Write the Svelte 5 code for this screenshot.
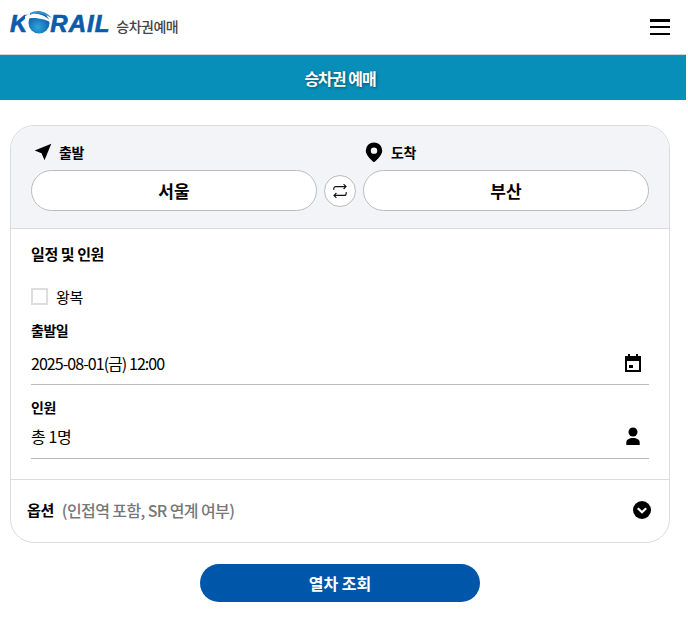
<script>
	let from = '서울';
	let to = '부산';
</script>

<div class="page">
	<header class="top">
		<div class="logo">
			<span class="brand">
				<span class="k">K</span>
				<svg class="globe" viewBox="0 0 30 26" width="30" height="26" aria-hidden="true">
					<defs>
						<radialGradient id="ball" cx="0.45" cy="0.7" r="0.65">
							<stop offset="0" stop-color="#2fa6dc" />
							<stop offset="1" stop-color="#0a5aa8" />
						</radialGradient>
					</defs>
					<circle cx="14" cy="14" r="10.500" fill="url(#ball)" />
					<path d="M0 7C8 2 20 4 30 16C20 9 9 8 0 10Z" fill="#fff" />
					<path d="M5 4C12 0 21 2 27 9C20 5 12 3 5 6Z" fill="#2f93d2" />
				</svg>
				<span class="rail">RAIL</span>
			</span>
			<span class="sub">승차권예매</span>
		</div>
		<button class="menu" type="button" aria-label="메뉴">
			<span></span><span></span><span></span>
		</button>
	</header>

	<div class="band">승차권 예매</div>

	<section class="card">
		<div class="route">
			<div class="labels">
				<div class="lbl">
					<svg viewBox="0 0 24 24" width="20" height="20" aria-hidden="true"><path d="M22 2L2 10.200l8.200 3.400L13.800 22z" fill="#000" /></svg>
					<span>출발</span>
				</div>
				<div class="lbl">
					<svg viewBox="0 0 24 24" width="22" height="22" aria-hidden="true"><path fill-rule="evenodd" d="M12 1.500a9 9 0 0 0-9 9c0 6 9 12.500 9 12.500s9-6.500 9-12.500a9 9 0 0 0-9-9zm0 5.500a3.500 3.500 0 1 1 0 7 3.500 3.500 0 0 1 0-7z" fill="#000" /></svg>
					<span>도착</span>
				</div>
			</div>
			<div class="stations">
				<button class="station" type="button">{from}</button>
				<button class="swap" type="button" aria-label="출발 도착 바꾸기">
					<svg viewBox="0 0 16 16" width="16" height="16" fill="none" stroke="#111" stroke-width="1.100" aria-hidden="true">
						<path d="M1.800 7V5.600A2 2 0 0 1 3.800 3.600H14M11.600 1.200L14 3.600L11.600 6" />
						<path d="M14.200 9V10.400A2 2 0 0 1 12.200 12.400H2M4.400 10L2 12.400L4.400 14.800" />
					</svg>
				</button>
				<button class="station" type="button">{to}</button>
			</div>
		</div>

		<div class="schedule">
			<h2>일정 및 인원</h2>
			<label class="round">
				<span class="box"></span>
				<span>왕복</span>
			</label>
			<div class="field">
				<div class="name">출발일</div>
				<div class="value date">
					<span>2025-08-01(금) 12:00</span>
					<svg viewBox="0 0 16 18" width="16" height="18" aria-hidden="true"><path fill-rule="evenodd" d="M3 0h2v2h6V0h2v2h3v16H0V2h3zM2 7v9h12V7zM4 11h4v3H4z" fill="#000" /></svg>
				</div>
			</div>
			<div class="field">
				<div class="name">인원</div>
				<div class="value people">
					<span>총 1명</span>
					<svg viewBox="0 0 16 18" width="16" height="18" aria-hidden="true"><circle cx="8" cy="5" r="4.500" fill="#000" /><path d="M1.300 18v-2.500c0-3 3-4.500 6.700-4.500s6.700 1.500 6.700 4.500V18z" fill="#000" /></svg>
				</div>
			</div>
		</div>

		<div class="options">
			<div class="opt-text"><strong>옵션</strong><span>(인접역 포함, SR 연계 여부)</span></div>
			<svg viewBox="0 0 18 18" width="18" height="18" aria-hidden="true">
				<circle cx="9" cy="9" r="9" fill="#000" />
				<path d="M4.800 7.200L9 11.200L13.200 7.200" fill="none" stroke="#fff" stroke-width="2.200" />
			</svg>
		</div>
	</section>

	<div class="actions">
		<button class="search" type="button">열차 조회</button>
	</div>
</div>

<style>
	:global(body) {
		margin: 0;
		background: #fff;
	}

	.page {
		width: 686px;
		font-family: "Noto Sans CJK KR", "Noto Sans", sans-serif;
		color: #000;
		overflow: hidden;
	}

	button {
		font-family: inherit;
		padding: 0;
		cursor: pointer;
	}

	.top {
		height: 54px;
		border-bottom: 1px solid #d4d4d4;
		display: flex;
		align-items: center;
		justify-content: space-between;
		padding: 0 16px 0 10px;
	}

	.logo {
		display: flex;
		align-items: center;
		gap: 6px;
		margin-top: -6px;
	}

	.brand {
		display: flex;
		align-items: center;
		height: 30px;
		font-family: "Liberation Sans", sans-serif;
		font-weight: 700;
		font-style: italic;
		font-size: 24px;
		color: #0a5ca8;
	}

	.k {
		-webkit-text-stroke: 0.7px #0a5ca8;
	}

	.globe {
		margin: -4px -5px 0 -2px;
	}

	.rail {
		letter-spacing: 1px;
		-webkit-text-stroke: 0.7px #0a5ca8;
	}

	.sub {
		font-size: 14px;
		font-weight: 500;
		letter-spacing: -0.5px;
		color: #444;
		margin-top: 4px;
	}

	.menu {
		width: 20px;
		height: 16px;
		border: 0;
		background: none;
		display: flex;
		flex-direction: column;
		justify-content: space-between;
	}

	.menu span {
		display: block;
		height: 2.500px;
		background: #000;
	}

	.band {
		height: 45px;
		background: #078fb9;
		color: #fff;
		display: flex;
		align-items: center;
		justify-content: center;
		padding-right: 6px;
		font-size: 16px;
		font-weight: 700;
		letter-spacing: -1px;
		text-shadow: 1px 1px 3px rgba(0, 0, 0, 0.45);
	}

	.card {
		margin: 25px 16px 0 10px;
		border: 1px solid #dcdcdc;
		border-radius: 24px;
		overflow: hidden;
	}

	.route {
		background: #f2f4f8;
		border-bottom: 1px solid #dcdcdc;
		padding: 14px 20px 17px;
	}

	.labels {
		display: grid;
		grid-template-columns: 1fr 1fr;
		column-gap: 42px;
		height: 30px;
	}

	.lbl {
		display: flex;
		align-items: center;
		gap: 6px;
		font-size: 14px;
		font-weight: 700;
		letter-spacing: -0.5px;
		height: 24px;
		padding-left: 2px;
	}

	.stations {
		display: flex;
		align-items: center;
		gap: 7px;
	}

	.station {
		flex: 1;
		height: 41px;
		border: 1px solid #bbb;
		border-radius: 21px;
		background: #fff;
		font-size: 17px;
		font-weight: 700;
		color: #000;
	}

	.swap {
		width: 32px;
		height: 32px;
		flex: none;
		border: 1px solid #bbb;
		border-radius: 50%;
		background: #fff;
		display: flex;
		align-items: center;
		justify-content: center;
	}

	.schedule {
		padding: 13px 20px 20px;
	}

	h2 {
		margin: 0;
		font-size: 15px;
		font-weight: 700;
		letter-spacing: -0.4px;
		line-height: 24px;
	}

	.round {
		display: flex;
		align-items: center;
		gap: 8px;
		margin-top: 18px;
		font-size: 15px;
		height: 24px;
		letter-spacing: -0.3px;
	}

	.box {
		width: 17px;
		height: 17px;
		box-sizing: border-box;
		border: 2px solid #dedede;
		background: #fff;
	}

	.field {
		margin-top: 10px;
	}

	.name {
		font-size: 14px;
		font-weight: 700;
		line-height: 24px;
		letter-spacing: -0.5px;
	}

	.value {
		height: 43px;
		box-sizing: border-box;
		border-bottom: 1px solid #b9b9b9;
		display: flex;
		align-items: center;
		justify-content: space-between;
		font-size: 16px;
		letter-spacing: -0.95px;
		padding-right: 8px;
	}

	.people {
		height: 40px;
		padding-bottom: 6px;
		letter-spacing: -0.4px;
	}

	.options {
		border-top: 1px solid #dcdcdc;
		height: 63px;
		box-sizing: border-box;
		display: flex;
		align-items: center;
		justify-content: space-between;
		padding: 0 18px 3px 16px;
	}

	.opt-text {
		display: flex;
		align-items: center;
		gap: 8px;
		font-size: 15px;
		letter-spacing: -0.4px;
	}

	.opt-text strong {
		font-weight: 700;
	}

	.opt-text span {
		color: #777;
		font-size: 16px;
		letter-spacing: -0.6px;
		font-weight: 500;
	}

	.actions {
		display: flex;
		justify-content: center;
		margin-top: 21px;
		padding-right: 6px;
	}

	.search {
		width: 280px;
		height: 38px;
		border: 0;
		border-radius: 19px;
		background: #0056a8;
		color: #fff;
		font-size: 16px;
		font-weight: 700;
	}
</style>
